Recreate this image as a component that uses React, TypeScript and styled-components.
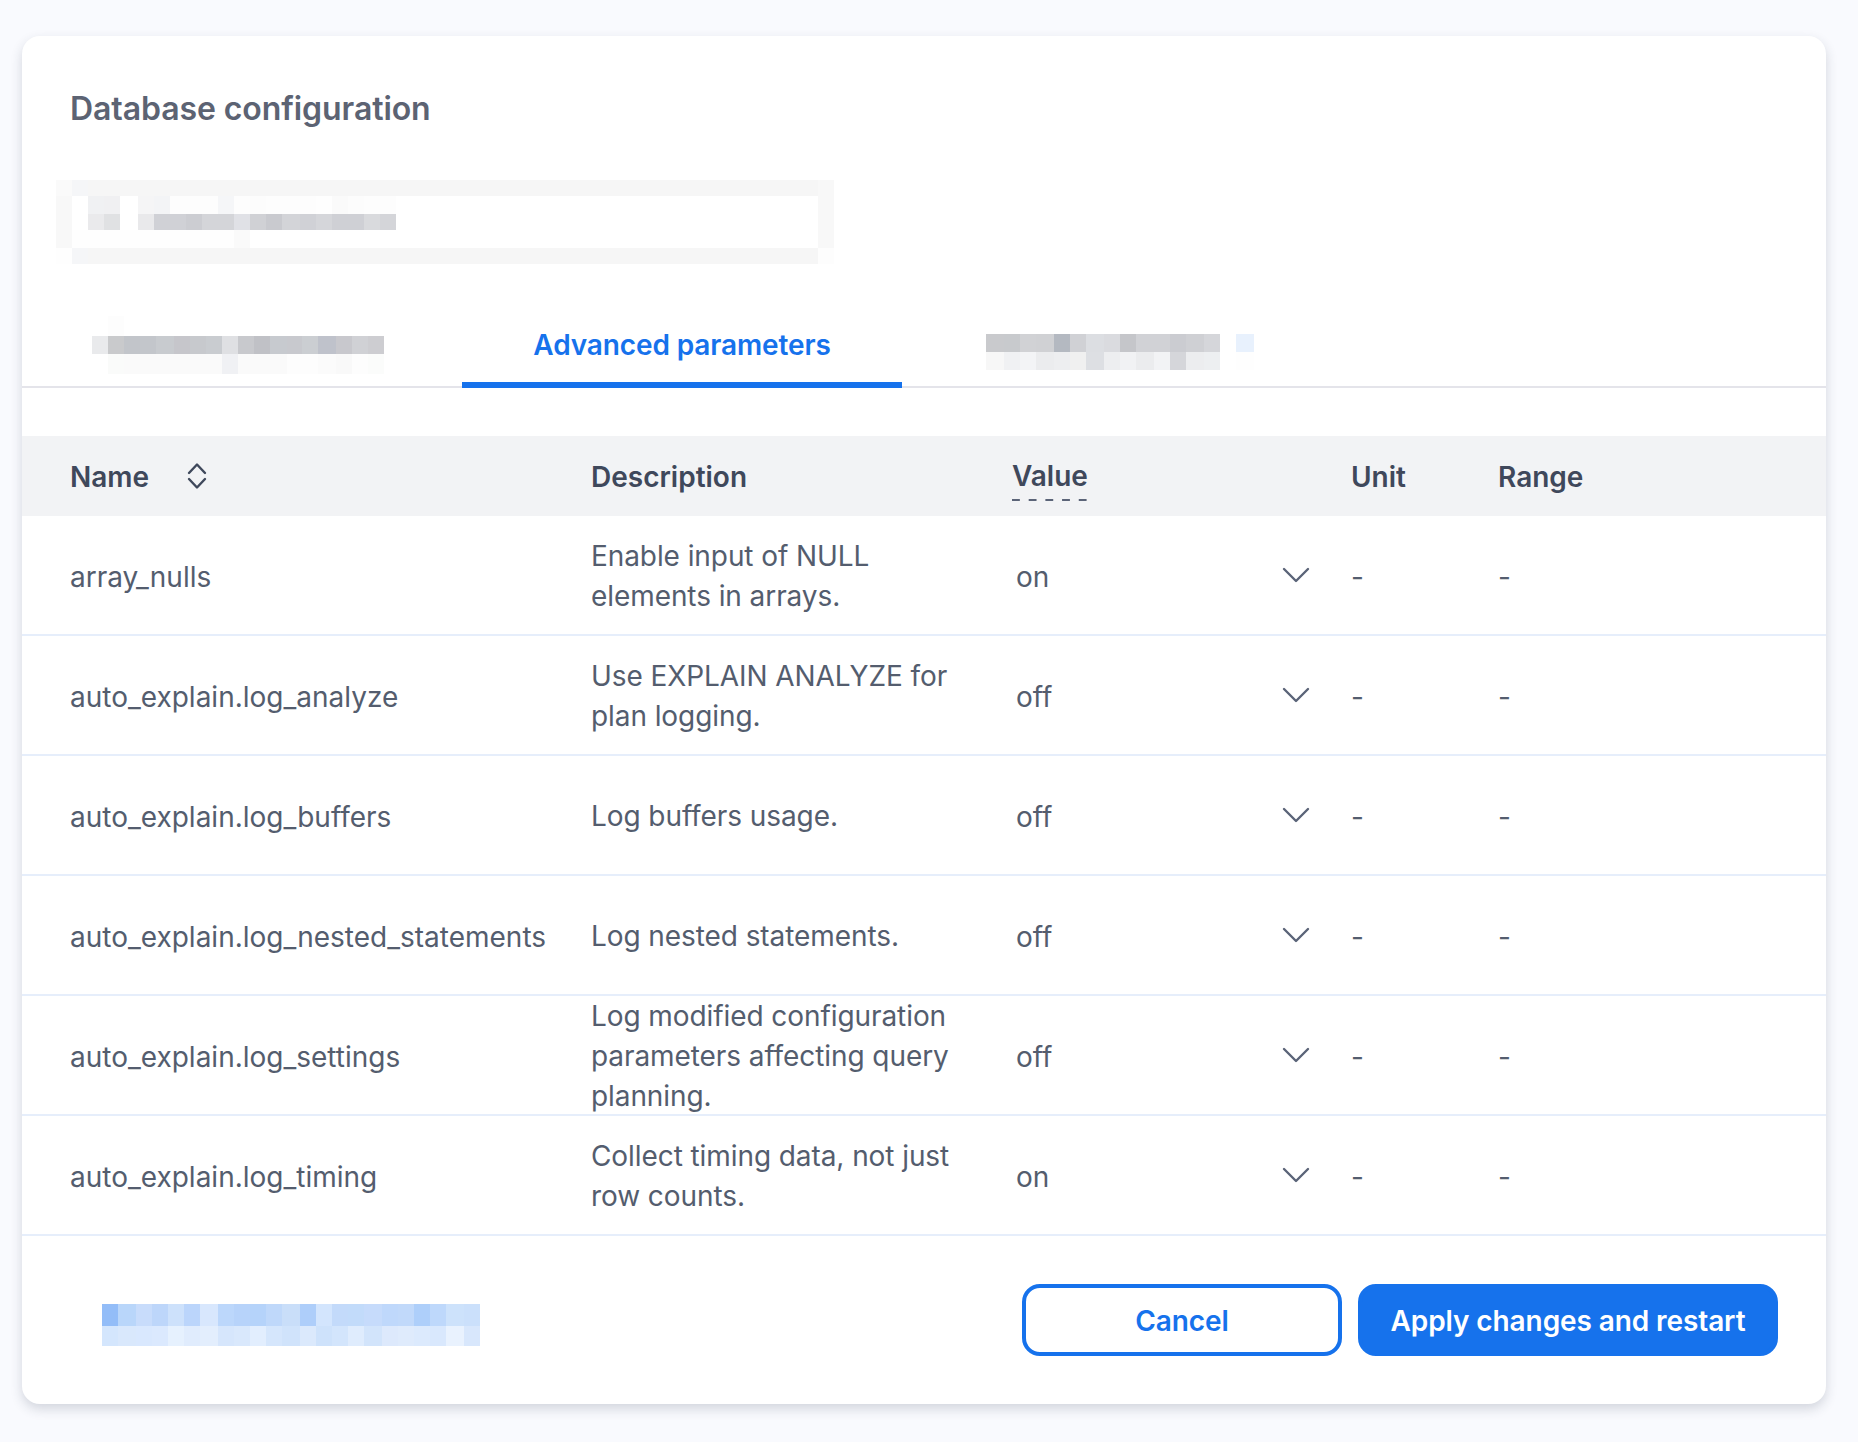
import React from 'react';
import styled, { createGlobalStyle } from 'styled-components';

const GlobalStyle = createGlobalStyle`
  html, body {
    margin: 0;
    padding: 0;
    background: #f9fafe;
  }
  * {
    box-sizing: border-box;
  }
`;

const Page = styled.div`
  width: 1858px;
  height: 1442px;
  padding: 36px 32px 38px 22px;
  font-family: Inter, "Liberation Sans", sans-serif;
  font-size: 28px;
  line-height: 40px;
  color: #545d6e;
`;

const Card = styled.div`
  width: 1804px;
  height: 1368px;
  background: #fff;
  border-radius: 18px;
  box-shadow: 0 5px 12px rgba(40, 50, 70, 0.18);
  display: flex;
  flex-direction: column;
`;

const Title = styled.h1`
  margin: 0;
  padding: 52px 48px 0;
  height: 144px;
  font-size: 32px;
  line-height: 42px;
  font-weight: 600;
  letter-spacing: -0.08px;
  color: #5c6373;
`;

const TabBar = styled.div`
  display: flex;
  height: 86px;
  margin-top: 38px;
  padding-top: 2px;
  border-bottom: 2px solid #e4e4ea;
`;

const Tab = styled.div<{ $width: number; $top: number; $left: number }>`
  width: ${(p) => p.$width}px;
  height: 84px;
  padding: ${(p) => p.$top}px 0 0 ${(p) => p.$left}px;
`;

const ActiveTab = styled.div`
  width: 440px;
  height: 84px;
  padding-top: 21px;
  text-align: center;
  font-weight: 600;
  letter-spacing: -0.12px;
  color: #1672ec;
  border-bottom: 6px solid #1672ec;
`;

const TileGrid = styled.div<{ $cols: number[]; $rows: number[] }>`
  display: grid;
  grid-template-columns: ${(p) => p.$cols.map((w) => `${w}px`).join(' ')};
  grid-template-rows: ${(p) => p.$rows.map((h) => `${h}px`).join(' ')};
`;

const Tile = styled.div<{ $c: string; $span: number }>`
  background: ${(p) => p.$c};
  grid-column: span ${(p) => p.$span};
`;

const InputMosaic = styled.div`
  margin-left: 34px;
`;

const Table = styled.div`
  margin-top: 48px;
`;

const HeadRow = styled.div`
  display: grid;
  grid-template-columns: 521px 421px 339px 147px 1fr;
  grid-template-rows: 100%;
  align-items: center;
  height: 80px;
  padding: 2px 48px 0;
  background: #f2f3f5;
  font-weight: 600;
  color: #3f485b;
`;

const NameHead = styled.div`
  display: flex;
  align-items: center;
  gap: 38px;

  svg {
    margin-top: -2px;
  }
`;

const ValueHead = styled.div`
  align-self: start;
  justify-self: start;
  height: 45px;
  margin-top: 18px;
  background: linear-gradient(90deg, #5b6478 8px, transparent 8px) left bottom / 16.7px 2px repeat-x;
`;

const Row = styled.div`
  display: grid;
  grid-template-columns: 521px 421px 339px 147px 1fr;
  grid-template-rows: 100%;
  align-items: center;
  height: 120px;
  padding: 4px 48px 0;
  border-bottom: 2px solid #e6eefb;
`;

const Description = styled.div`
  width: 380px;
  margin-top: -2px;
  letter-spacing: -0.08px;
`;

const ValueSelect = styled.div`
  display: flex;
  align-items: center;
  justify-content: space-between;
  width: 299px;
  padding-left: 4px;

  svg {
    margin-top: -4px;
  }
`;

const Footer = styled.div`
  display: flex;
  justify-content: space-between;
  align-items: flex-start;
  padding: 48px 48px 0 80px;
`;

const FooterMosaic = styled.div`
  margin-top: 20px;
`;

const Buttons = styled.div`
  display: flex;
  gap: 16px;
`;

const Button = styled.button<{ $primary?: boolean }>`
  width: ${(p) => (p.$primary ? 420 : 320)}px;
  height: 72px;
  padding: 2px 0 0;
  border: 4px solid #1672ec;
  border-radius: 18px;
  background: ${(p) => (p.$primary ? '#1672ec' : '#fff')};
  color: ${(p) => (p.$primary ? '#fff' : '#1672ec')};
  font-family: inherit;
  font-size: 28px;
  font-weight: 600;
  letter-spacing: -0.1px;
`;

type TileRow = (string | [string, number])[];

const Mosaic = ({ cols, rows, heights }: { cols: number[]; rows: TileRow[]; heights: number[] }) => (
  <TileGrid $cols={cols} $rows={heights}>
    {rows.flatMap((row, i) =>
      row.map((t, j) => {
        const [c, span] = typeof t === 'string' ? [t, 1] : t;
        return <Tile key={`${i}-${j}`} $c={c} $span={span} />;
      })
    )}
  </TileGrid>
);

const inputCols = [16, 16, 16, 16, 18, 16, 16, 16, 16, 16, 16, 16, 16, 16, 18, 16, 16, 16, 16, 16, 16, 422, 16];
const inputRows: TileRow[] = [
  ['#fafafa', '#f5f6f8', ['#f6f6f6', 20], '#f8f8f8'],
  ['#f8f8f8', '#fff', '#f0f1f3', '#f0f0f2', '#fff', '#f5f5f6', '#f3f4f6', '#fdfdfd', '#fdfdfd', '#fdfdfd', '#f5f6f8', '#fdfdfd', '#fcfcfc', '#fdfdfd', '#fdfdfd', '#fdfdfd', '#fefefe', '#fafafa', '#fcfcfc', '#fdfdfd', '#fdfdfd', '#fff', '#f8f8f8'],
  ['#f8f8f8', '#fff', '#eaeaec', '#e0e1e3', '#fff', '#e9e9eb', '#d0d1d6', '#d0d1d6', '#cccdd2', '#d4d5d9', '#d4d5d9', '#e0e1e6', '#d0d1d5', '#c9cacf', '#d3d4d8', '#d0d1d6', '#d5d6da', '#cfd0d5', '#cfd0d5', '#d9dadd', '#d4d5d9', '#fff', '#f8f8f8'],
  ['#f8f8f8', ['#fefefe', 10], '#fafafa', ['#fff', 10], '#f8f8f8'],
  ['#fefefe', '#f5f6f8', ['#f6f6f6', 20], '#fdfdfd'],
];

const tabOneCols = [16, 16, 16, 16, 18, 16, 16, 16, 16, 16, 16, 17, 15, 16, 18, 16, 16, 16];
const tabOneRows: TileRow[] = [
  ['#fff', '#fdfdfd', ['#fff', 16]],
  ['#e9eaec', '#c9cacc', '#c2c5ca', '#c3c6cb', '#c8cbcf', '#c6c6cb', '#c7c9cd', '#c9ccd0', '#dfe0e3', '#c8c9cd', '#c0c1c6', '#c7cacf', '#c8c9ce', '#cbced2', '#bfc2cb', '#c8c8cd', '#d0d1d5', '#cdcdd1'],
  ['#fff', '#fafbfa', ['#fafafa', 6], '#f0f1f4', ['#fafafa', 3], '#fdfdfd', '#fdfdfd', '#fbfbfb', '#f9f9f9', '#fdfdfd', '#fbfcfb'],
];

const tabThreeCols = [18, 16, 16, 18, 16, 16, 18, 16, 16, 18, 16, 16, 18, 16, 16, 18];
const tabThreeRows: TileRow[] = [
  ['#c9cacd', '#c8cacd', '#d1d2d5', '#d0d1d4', '#b4b9c1', '#d0d1d5', '#dcdee2', '#dadbdf', '#c5c6ca', '#d1d2d6', '#d1d2d6', '#cbccd1', '#cfd0d4', '#d5d6da', '#fff', '#e8f1fd'],
  ['#f7f7f7', '#f0f1f3', '#f3f4f6', '#ebecee', '#edeef0', '#f0f0f0', '#dddfe3', '#edeef0', '#f1f2f4', '#ebecee', '#f2f3f5', '#d5d6da', '#ecedef', '#edeff1', '#fff', '#fefefe'],
];

const footerCols = [16, 18, 16, 16, 16, 16, 18, 16, 16, 16, 16, 18, 16, 16, 16, 16, 18, 16, 16, 16, 16, 18, 16];
const footerRows: TileRow[] = [
  ['#93bdf8', '#b9d6fa', '#c8dcfb', '#bdd6fa', '#cde1fb', '#bbd5fb', '#d8e7fd', '#bcd7fb', '#b7d3fa', '#b5d3fa', '#bfd8fa', '#c9def9', '#aecefa', '#d3e5fd', '#c3dafa', '#c2dbfa', '#c6dbfb', '#bfd8fb', '#c1d9fa', '#aecffa', '#bed8fb', '#cde2fb', '#cbe0fb'],
  ['#d4e6fd', '#d9e8fc', '#d9e8fe', '#dbe9fe', '#e6f1fe', '#e0ecfd', '#e3eefd', '#d6e6fc', '#d9e8fc', '#e2eefe', '#d5e6fc', '#d0e3fb', '#dbe9fc', '#cee2fb', '#d3e5fc', '#dfecfd', '#d2e4fb', '#dde9fc', '#dfebfc', '#dceafd', '#d9e8fd', '#e9f2fe', '#d8e7fc'],
];

const params = [
  { name: 'array_nulls', description: 'Enable input of NULL elements in arrays.', value: 'on' },
  { name: 'auto_explain.log_analyze', description: 'Use EXPLAIN ANALYZE for plan logging.', value: 'off' },
  { name: 'auto_explain.log_buffers', description: 'Log buffers usage.', value: 'off' },
  { name: 'auto_explain.log_nested_statements', description: 'Log nested statements.', value: 'off' },
  { name: 'auto_explain.log_settings', description: 'Log modified configuration parameters affecting query planning.', value: 'off' },
  { name: 'auto_explain.log_timing', description: 'Collect timing data, not just row counts.', value: 'on' },
];

const Chevron = () => (
  <svg width="30" height="18" viewBox="0 0 30 18" fill="none">
    <path d="M3 3L15 15L27 3" stroke="#5b6478" strokeWidth="2.4" strokeLinecap="round" strokeLinejoin="round" />
  </svg>
);

const SortIcon = () => (
  <svg width="20" height="28" viewBox="0 0 20 28" fill="none">
    <path d="M2 11L10 2.5L18 11M2 17L10 25.5L18 17" stroke="#3f485b" strokeWidth="2.4" strokeLinecap="round" strokeLinejoin="round" />
  </svg>
);

const App: React.FC = () => {
  return (
    <Page>
      <GlobalStyle />
      <Card>
        <Title>Database configuration</Title>
        <InputMosaic>
          <Mosaic cols={inputCols} rows={inputRows} heights={[16, 18, 16, 18, 16]} />
        </InputMosaic>
        <TabBar>
          <Tab $width={440} $top={12} $left={70}>
            <Mosaic cols={tabOneCols} rows={tabOneRows} heights={[20, 18, 20]} />
          </Tab>
          <ActiveTab>Advanced parameters</ActiveTab>
          <Tab $width={400} $top={30} $left={84}>
            <Mosaic cols={tabThreeCols} rows={tabThreeRows} heights={[18, 18]} />
          </Tab>
        </TabBar>
        <Table>
          <HeadRow>
            <NameHead>
              Name
              <SortIcon />
            </NameHead>
            <div>Description</div>
            <ValueHead>Value</ValueHead>
            <div>Unit</div>
            <div>Range</div>
          </HeadRow>
          {params.map((p) => (
            <Row key={p.name}>
              <div>{p.name}</div>
              <Description>{p.description}</Description>
              <ValueSelect>
                {p.value}
                <Chevron />
              </ValueSelect>
              <div>-</div>
              <div>-</div>
            </Row>
          ))}
        </Table>
        <Footer>
          <FooterMosaic>
            <Mosaic cols={footerCols} rows={footerRows} heights={[22, 20]} />
          </FooterMosaic>
          <Buttons>
            <Button>Cancel</Button>
            <Button $primary>Apply changes and restart</Button>
          </Buttons>
        </Footer>
      </Card>
    </Page>
  );
};

export default App;
